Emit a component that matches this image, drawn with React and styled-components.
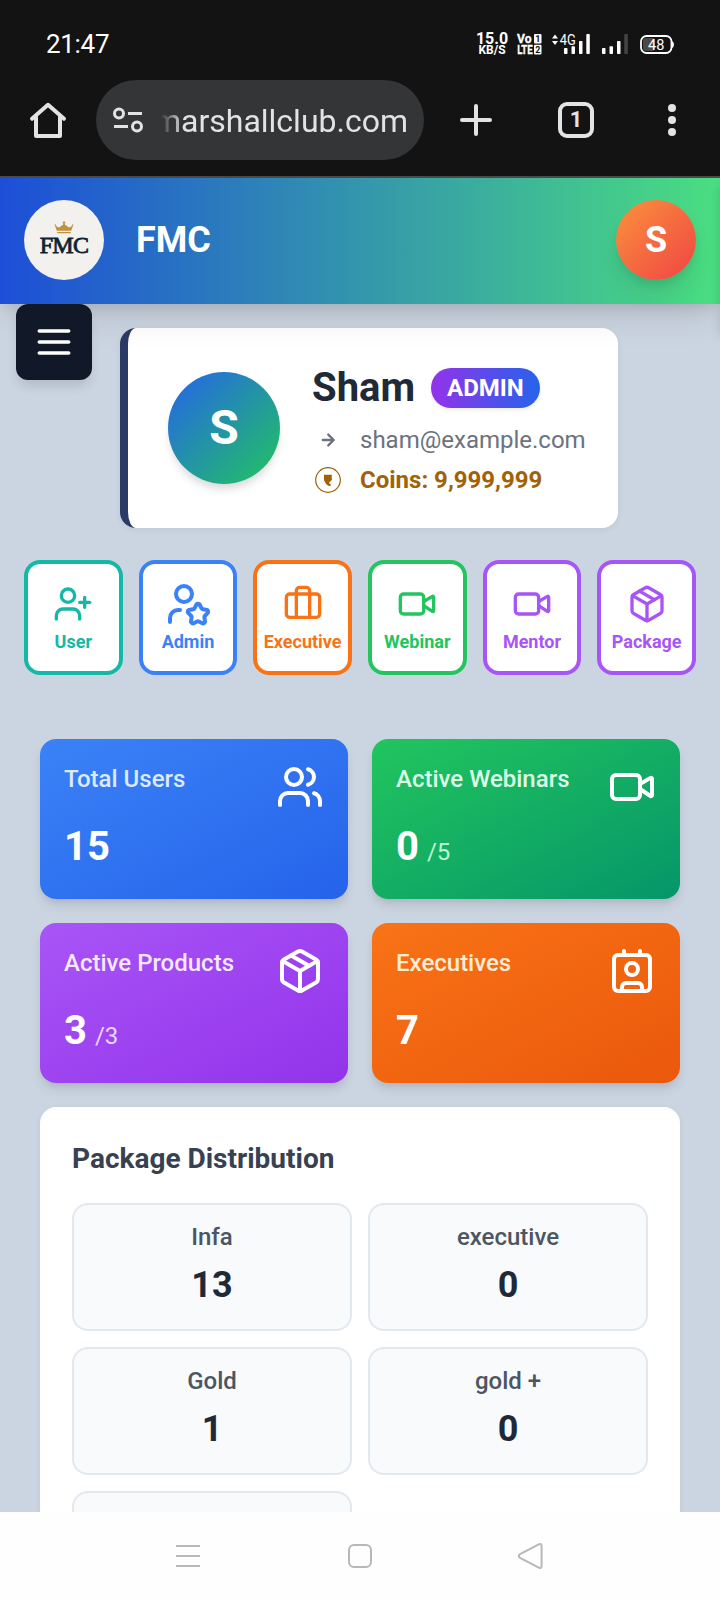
import React from "react";
import styled, { createGlobalStyle } from "styled-components";
import { UserPlus, UserStar, Briefcase, Video, Package, Users, Contact } from "lucide-react";

const GlobalStyle = createGlobalStyle`
  *, *::before, *::after { box-sizing: border-box; }
  html, body { margin: 0; padding: 0; }
  body { font-family: Roboto, "Noto Sans", sans-serif; background: #cbd5e1; }
  svg { display: block; flex: none; overflow: visible; }
`;

const Screen = styled.div`
  width: 720px;
  height: 1600px;
  display: flex;
  flex-direction: column;
  overflow: hidden;
  background: #cbd5e1;
`;

/* ---------- phone and browser chrome ---------- */

const Chrome = styled.div`
  flex: none;
  height: 178px;
  background: #131313;
  border-bottom: 2px solid #4a4a4a;
  color: #fff;
`;

const StatusBar = styled.div`
  height: 80px;
  padding: 8px 46px 0;
  display: flex;
  align-items: center;
`;

const Clock = styled.div`
  flex: 1;
  font-size: 26px;
  line-height: 32px;
  letter-spacing: -0.3px;
  margin-top: -1px;
`;

const NetSpeed = styled.div`
  display: flex;
  flex-direction: column;
  align-items: center;
  width: 32px;
  margin-right: 9px;
  font-weight: 700;
  font-size: 16px;
  line-height: 13px;
  span { font-size: 12px; line-height: 11px; }
`;

const SignalSlot = styled.div`
  margin-left: ${(p) => p.$gap}px;
`;

const AddressRow = styled.div`
  height: 80px;
  display: flex;
  align-items: center;
  padding: 0 40px 0 28px;
`;

const AddressPill = styled.div`
  width: 328px;
  height: 80px;
  margin-left: 28px;
  padding: 0 16px 0 16px;
  border-radius: 40px;
  background: #343537;
  display: flex;
  align-items: center;
`;

const Domain = styled.div`
  flex: 1;
  min-width: 0;
  margin: 2px 0 0 17px;
  overflow: hidden;
  display: flex;
  justify-content: flex-end;
  white-space: nowrap;
  font-size: 32px;
  line-height: 44px;
  color: #e3e3e3;
  mask-image: linear-gradient(to right, transparent, #000 22px);
`;

const TabCount = styled.div`
  width: 36px;
  height: 36px;
  margin-left: 66px;
  border: 4px solid #e3e3e3;
  border-radius: 9px;
  display: flex;
  align-items: center;
  justify-content: center;
  font-size: 22px;
  font-weight: 700;
  line-height: 28px;
  color: #e3e3e3;
`;

const Dots = styled.div`
  margin-left: 74px;
  display: flex;
  flex-direction: column;
  gap: 4px;
  i { width: 8px; height: 8px; border-radius: 50%; background: #e3e3e3; }
`;

/* ---------- web page ---------- */

const Page = styled.div`
  flex: 1;
  min-height: 0;
  overflow: hidden;
  position: relative;
`;

const Header = styled.header`
  position: relative;
  z-index: 2;
  height: 126px;
  padding: 0 24px;
  display: flex;
  align-items: center;
  background: linear-gradient(to right, #1d4ed8, #4ade80);
  box-shadow: 0 20px 30px -6px rgba(0, 0, 0, 0.1), 0 8px 12px -4px rgba(0, 0, 0, 0.1);
`;

const Logo = styled.div`
  width: 80px;
  height: 80px;
  margin-top: -2px;
  border-radius: 50%;
  background: #f2f1ee;
  display: flex;
  flex-direction: column;
  align-items: center;
  padding-top: 21px;
`;

const LogoText = styled.div`
  font-family: "Liberation Serif", serif;
  font-size: 24px;
  line-height: 24px;
  letter-spacing: -0.7px;
  margin-top: -1px;
  color: #0f2230;
  -webkit-text-stroke: 0.8px #0f2230;
`;

const Brand = styled.div`
  flex: 1;
  margin-left: 32px;
  font-size: 36px;
  font-weight: 700;
  line-height: 56px;
  margin-top: -2px;
  color: #fff;
`;

const Avatar = styled.div`
  width: ${(p) => p.$size}px;
  height: ${(p) => p.$size}px;
  flex: none;
  border-radius: 50%;
  display: flex;
  align-items: center;
  justify-content: center;
  background: linear-gradient(to bottom right, ${(p) => p.$from}, ${(p) => p.$to});
  color: #fff;
  font-weight: 700;
  font-size: ${(p) => p.$font}px;
  line-height: 1;
  box-shadow: 0 ${(p) => p.$lift}px ${(p) => p.$lift * 1.5}px -4px rgba(0, 0, 0, 0.1),
    0 6px 8px -2px rgba(0, 0, 0, 0.08);
`;

const HeaderAvatar = styled(Avatar)`
  margin-top: -2px;
`;

const MenuButton = styled.button`
  position: absolute;
  z-index: 3;
  left: 16px;
  top: 126px;
  width: 76px;
  height: 76px;
  padding: 16px;
  border: 0;
  border-radius: 12px;
  background: #111827;
  box-shadow: 0 8px 12px -2px rgba(0, 0, 0, 0.12);
`;

const DrawerEdge = styled.div`
  position: absolute;
  z-index: 3;
  left: 100%;
  top: 0;
  width: 100px;
  height: 150px;
  box-shadow: 0 8px 10px rgba(0, 0, 0, 0.14);
`;

const ProfileCard = styled.section`
  width: 498px;
  height: 200px;
  margin: 24px 0 0 120px;
  padding: 32px 0 32px 40px;
  border-left: 8px solid #2c3a66;
  border-radius: 16px;
  background: #fff;
  display: flex;
  align-items: center;
  gap: 32px;
  box-shadow: 0 2px 6px rgba(0, 0, 0, 0.06);
`;

const ProfileInfo = styled.div`
  display: flex;
  flex-direction: column;
  gap: 8px;
`;

const NameRow = styled.div`
  display: flex;
  align-items: center;
  gap: 16px;
  height: 56px;
`;

const Name = styled.div`
  font-size: 40px;
  font-weight: 700;
  line-height: 56px;
  color: #1f2937;
`;

const RoleBadge = styled.div`
  height: 40px;
  padding: 0 16px;
  border-radius: 20px;
  font-size: 24px;
  font-weight: 700;
  line-height: 40px;
  color: #fff;
  background: linear-gradient(to right, #9333ea, #2563eb);
  box-shadow: 0 2px 4px rgba(0, 0, 0, 0.08);
`;

const DetailRow = styled.div`
  display: flex;
  align-items: center;
  gap: 16px;
  font-size: 24px;
  line-height: 32px;
  font-weight: ${(p) => (p.$strong ? 700 : 400)};
  color: ${(p) => p.$color};
`;

const Actions = styled.nav`
  margin: 32px 24px 0;
  display: grid;
  grid-template-columns: repeat(6, 1fr);
  gap: 16px;
`;

const ActionCard = styled.div`
  height: 115px;
  border: 4px solid ${(p) => p.$color};
  border-radius: 16px;
  background: #fff;
  color: ${(p) => p.$color};
  display: flex;
  flex-direction: column;
  align-items: center;
  padding: 16px 0;
`;

const ActionIcon = styled.div`
  height: 48px;
  display: flex;
  align-items: center;
`;

const ActionLabel = styled.div`
  font-size: 18px;
  font-weight: 700;
  line-height: 27px;
  white-space: nowrap;
`;

const Stats = styled.section`
  margin: 64px 40px 0;
  display: grid;
  grid-template-columns: 1fr 1fr;
  gap: 24px;
`;

const StatCard = styled.div`
  height: 160px;
  padding: 24px;
  border-radius: 16px;
  color: #fff;
  background: linear-gradient(to bottom right, ${(p) => p.$from}, ${(p) => p.$to});
  box-shadow: 0 8px 12px -2px rgba(0, 0, 0, 0.1), 0 4px 8px -4px rgba(0, 0, 0, 0.1);
`;

const StatTop = styled.div`
  height: 48px;
  display: flex;
  justify-content: space-between;
`;

const StatTitle = styled.div`
  font-size: 24px;
  font-weight: 500;
  line-height: 32px;
  color: ${(p) => p.$color};
`;

const StatValue = styled.div`
  margin-top: 8px;
  display: flex;
  align-items: baseline;
  gap: 8px;
  font-size: 40px;
  font-weight: 700;
  line-height: 56px;
`;

const StatTotal = styled.span`
  font-size: 24px;
  font-weight: 400;
  color: ${(p) => p.$color};
`;

const Panel = styled.section`
  margin: 24px 40px 0;
  padding: 32px;
  border-radius: 16px;
  background: #fff;
  box-shadow: 0 2px 6px rgba(0, 0, 0, 0.06);
`;

const PanelTitle = styled.h2`
  margin: 0 0 24px;
  font-size: 28px;
  font-weight: 700;
  line-height: 40px;
  color: #374151;
`;

const PackageGrid = styled.div`
  display: grid;
  grid-template-columns: 1fr 1fr;
  gap: 16px;
`;

const PackageBox = styled.div`
  height: 128px;
  padding: 16px;
  border: 2px solid #e2e8f0;
  border-radius: 16px;
  background: #f9fafc;
  text-align: center;
`;

const PackageName = styled.div`
  font-size: 24px;
  font-weight: 500;
  line-height: 32px;
  color: #4b5563;
`;

const PackageCount = styled.div`
  margin-top: 4px;
  font-size: 36px;
  font-weight: 700;
  line-height: 56px;
  color: #1f2937;
`;

const NavBar = styled.div`
  flex: none;
  height: 88px;
  display: flex;
  align-items: center;
  justify-content: space-between;
  padding: 0 174px 0 174px;
  background: #fefefe;
`;

/* ---------- drawings ---------- */

const VolteIcon = () => (
  <svg width="25" height="22" viewBox="0 0 25 22" fill="#fff" fontFamily="Roboto, sans-serif" fontWeight="700">
    <g stroke="#fff" strokeWidth="0.3">
      <text x="0" y="10.4" fontSize="13.5" textLength="14.5" lengthAdjust="spacingAndGlyphs">Vo</text>
      <text x="0.2" y="21.2" fontSize="13.5" textLength="15.5" lengthAdjust="spacingAndGlyphs">LTE</text>
    </g>
    <rect x="17" y="1" width="7.5" height="9.6" rx="1" />
    <rect x="17" y="11.8" width="7.5" height="9.6" rx="1" />
    <text x="18.2" y="9.2" fontSize="9" fill="#131313">1</text>
    <text x="18.2" y="20" fontSize="9" fill="#131313">2</text>
  </svg>
);

const SignalBars = ({ lastColor = "#fff", data = false }) => (
  <svg width={data ? 38 : 26} height="22" viewBox={data ? "-12 0 38 22" : "0 0 26 22"} fill="#fff">
    {data && (
      <g>
        <path d="M-12 5.5 L-9 1.6 L-6 5.5Z M-12 8 L-9 11.9 L-6 8Z" />
        <text x="-4.2" y="12" fontSize="14.5" fontFamily="Roboto, sans-serif" textLength="16" lengthAdjust="spacingAndGlyphs">
          4G
        </text>
      </g>
    )}
    <rect x="0" y="15" width="3.5" height="6" rx="0.8" />
    <rect x="7.5" y="13.2" width="3.5" height="7.8" rx="0.8" />
    <rect x="15" y="8" width="3.5" height="13" rx="0.8" />
    <rect x="22.3" y="1" width="3.5" height="20" rx="0.8" fill={lastColor} />
  </svg>
);

const BatteryIcon = () => (
  <svg width="34" height="19" viewBox="0 0 34 19">
    <rect x="3" y="3" width="12" height="13" rx="3" fill="#4a4a4a" />
    <rect x="1" y="1" width="30.5" height="17" rx="5.5" fill="none" stroke="#fff" strokeWidth="1.8" />
    <path d="M32 6 q2 1 2 3.5 q0 2.5 -2 3.5z" fill="#fff" />
    <text x="16.2" y="14.7" fontSize="14.5" textAnchor="middle" fill="#fff" fontFamily="Roboto, sans-serif">48</text>
  </svg>
);

const HomeIcon = () => (
  <svg width="40" height="40" viewBox="0 0 40 40" fill="none" stroke="#e3e3e3" strokeWidth="4" strokeLinecap="round" strokeLinejoin="round">
    <path d="M4 18.8 L20 4.8 L36 18.8" />
    <path d="M8 17 V36 H32 V17" />
  </svg>
);

const TuneIcon = () => (
  <svg width="32" height="28" viewBox="0 0 32 28" fill="none" stroke="#e3e3e3" strokeWidth="3">
    <circle cx="7" cy="7.5" r="4.500" />
    <circle cx="25" cy="20.5" r="4.500" />
    <path d="M16 7.5 H30 M2 20.5 H16" />
  </svg>
);

const PlusSlot = styled.div`
  margin-left: 36px;
`;

const PlusIcon = () => (
  <svg width="32" height="32" viewBox="0 0 32 32" stroke="#e3e3e3" strokeWidth="4" strokeLinecap="round">
    <path d="M2 16 H30 M16 2 V30" />
  </svg>
);

const CrownIcon = () => (
  <svg width="20" height="13" viewBox="0 0 20 13" fill="#c0923f">
    <path d="M0.5 3.6 C1.8 3.2 2.4 4 2.2 5 C3.6 6.8 6.2 6.8 7.6 4.2 L8.8 4.2 L9.4 2.4 L8.5 1.4 L10 0 L11.5 1.4 L10.6 2.4 L11.2 4.2 L12.4 4.2 C13.8 6.8 16.4 6.8 17.8 5 C17.6 4 18.2 3.2 19.5 3.6 L17.2 9.8 H2.8Z" />
    <path d="M3 11 H17 L16.4 12.3 H3.6Z" />
  </svg>
);

const MenuIcon = () => (
  <svg width="44" height="44" viewBox="0 0 24 24" stroke="#fff" strokeWidth="2" strokeLinecap="round">
    <path d="M4 6h16M4 12h16M4 18h16" />
  </svg>
);

const ArrowIcon = () => (
  <svg width="32" height="32" viewBox="0 0 32 32" fill="none" stroke="#6b7280" strokeWidth="2.4" strokeLinecap="round" strokeLinejoin="round">
    <path d="M10.8 16 H21.3 M16.3 10.6 L21.7 16 L16.3 21.4" />
  </svg>
);

const CoinIcon = () => (
  <svg width="32" height="32" viewBox="0 0 32 32" fill="none" stroke="#a16207">
    <circle cx="16" cy="16" r="12.3" strokeWidth="1.2" />
    <path
      d="M12 10.8 H20 L19.6 12.8 L20 15.2 C19.6 16.6 18.8 17.3 17.6 17.7 C16.8 18.6 17.4 20 18.9 20.6 L18.4 22.2 C15.6 21.8 13.9 20.4 12.8 17.4 L12 16.6 Z"
      fill="#a16207"
      stroke="none"
    />
  </svg>
);

const RecentsIcon = () => (
  <svg width="28" height="28" viewBox="0 0 28 28" stroke="#b8b8b8" strokeWidth="2">
    <path d="M2 4 H26 M2 14 H26 M2 24 H26" />
  </svg>
);

const HomeKeyIcon = () => (
  <svg width="28" height="28" viewBox="0 0 28 28" fill="none" stroke="#b8b8b8" strokeWidth="2">
    <rect x="3" y="3" width="22" height="22" rx="5" />
  </svg>
);

const BackIcon = () => (
  <svg width="28" height="28" viewBox="0 0 28 28" fill="none" stroke="#b8b8b8" strokeWidth="2" strokeLinejoin="round">
    <path d="M21.2 2.2 L1.6 12.4 Q0 14 1.6 15.6 L21.2 25.8 Q23.6 26.5 23.6 24 V4 Q23.6 1.500 21.2 2.2Z" />
  </svg>
);

/* ---------- data ---------- */

const actions = [
  { label: "User", color: "#14b8a6", Icon: UserPlus, size: 40 },
  { label: "Admin", color: "#3b82f6", Icon: UserStar, size: 48 },
  { label: "Executive", color: "#f97316", Icon: Briefcase, size: 40 },
  { label: "Webinar", color: "#22c55e", Icon: Video, size: 40 },
  { label: "Mentor", color: "#a855f7", Icon: Video, size: 40 },
  { label: "Package", color: "#a855f7", Icon: Package, size: 40 },
];

const stats = [
  { title: "Total Users", value: 15, from: "#3b82f6", to: "#2563eb", tint: "#dbeafe", Icon: Users },
  { title: "Active Webinars", value: 0, total: 5, from: "#22c55e", to: "#059669", tint: "#dcfce7", soft: "#bbf7d0", Icon: Video },
  { title: "Active Products", value: 3, total: 3, from: "#a855f7", to: "#9333ea", tint: "#f3e8ff", soft: "#e9d5ff", Icon: Package },
  { title: "Executives", value: 7, from: "#f97316", to: "#ea580c", tint: "#ffedd5", Icon: Contact },
];

const packages = [
  ["Infa", 13],
  ["executive", 0],
  ["Gold", 1],
  ["gold +", 0],
  ["", ""],
];

export default function App() {
  return (
    <>
      <GlobalStyle />
      <Screen>
        <Chrome>
          <StatusBar>
            <Clock>21:47</Clock>
            <NetSpeed>
              15.0<span>KB/S</span>
            </NetSpeed>
            <VolteIcon />
            <SignalSlot $gap={10}><SignalBars data /></SignalSlot>
            <SignalSlot $gap={12}><SignalBars lastColor="#444" /></SignalSlot>
            <SignalSlot $gap={12}><BatteryIcon /></SignalSlot>
          </StatusBar>
          <AddressRow>
            <HomeIcon />
            <AddressPill>
              <TuneIcon />
              <Domain>marshallclub.com</Domain>
            </AddressPill>
            <PlusSlot><PlusIcon /></PlusSlot>
            <TabCount>1</TabCount>
            <Dots><i /><i /><i /></Dots>
          </AddressRow>
        </Chrome>

        <Page>
          <Header>
            <Logo>
              <CrownIcon />
              <LogoText>FMC</LogoText>
            </Logo>
            <Brand>FMC</Brand>
            <HeaderAvatar $size={80} $font={36} $lift={16} $from="#fb923c" $to="#ef4444">S</HeaderAvatar>
          </Header>
          <MenuButton aria-label="Menu"><MenuIcon /></MenuButton>
          <DrawerEdge />

          <ProfileCard>
            <Avatar $size={112} $font={48} $lift={8} $from="#2563eb" $to="#22c55e">S</Avatar>
            <ProfileInfo>
              <NameRow>
                <Name>Sham</Name>
                <RoleBadge>ADMIN</RoleBadge>
              </NameRow>
              <DetailRow $color="#6b7280"><ArrowIcon />sham@example.com</DetailRow>
              <DetailRow $color="#a16207" $strong><CoinIcon />Coins: 9,999,999</DetailRow>
            </ProfileInfo>
          </ProfileCard>

          <Actions>
            {actions.map(({ label, color, Icon, size }) => (
              <ActionCard key={label} $color={color}>
                <ActionIcon><Icon size={size} /></ActionIcon>
                <ActionLabel>{label}</ActionLabel>
              </ActionCard>
            ))}
          </Actions>

          <Stats>
            {stats.map(({ title, value, total, from, to, tint, soft, Icon }) => (
              <StatCard key={title} $from={from} $to={to}>
                <StatTop>
                  <StatTitle $color={tint}>{title}</StatTitle>
                  <Icon size={48} />
                </StatTop>
                <StatValue>
                  {value}
                  {total !== undefined && <StatTotal $color={soft}>/{total}</StatTotal>}
                </StatValue>
              </StatCard>
            ))}
          </Stats>

          <Panel>
            <PanelTitle>Package Distribution</PanelTitle>
            <PackageGrid>
              {packages.map(([name, count], i) => (
                <PackageBox key={i}>
                  <PackageName>{name}</PackageName>
                  <PackageCount>{count}</PackageCount>
                </PackageBox>
              ))}
            </PackageGrid>
          </Panel>
        </Page>

        <NavBar>
          <RecentsIcon />
          <HomeKeyIcon />
          <BackIcon />
        </NavBar>
      </Screen>
    </>
  );
}
